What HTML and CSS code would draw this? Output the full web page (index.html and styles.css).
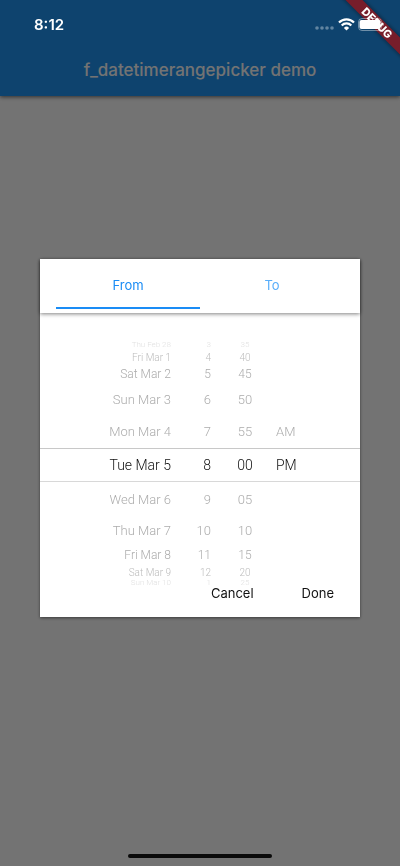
FILE: index.html
```html
<!DOCTYPE html>
<html lang="en">
<head>
<meta charset="utf-8">
<meta name="viewport" content="width=device-width, initial-scale=1">
<title>f_datetimerangepicker demo</title>
<link rel="stylesheet" href="styles.css">
</head>
<body>
<header class="app-bar">
  <h1 class="app-title">f_datetimerangepicker demo</h1>
</header>

<div class="barrier">
  <section class="dialog" role="dialog" aria-modal="true" aria-label="Date and time range">
    <div class="tabs" role="tablist">
      <button class="tab tab-active" role="tab" aria-selected="true">From</button>
      <button class="tab" role="tab" aria-selected="false">To</button>
    </div>
    <div class="picker">
      <ul class="wheel wheel-date">
        <li>Thu Feb 28</li><li>Fri Mar 1</li><li>Sat Mar 2</li><li>Sun Mar 3</li><li>Mon Mar 4</li>
        <li>Tue Mar 5</li>
        <li>Wed Mar 6</li><li>Thu Mar 7</li><li>Fri Mar 8</li><li>Sat Mar 9</li><li>Sun Mar 10</li>
      </ul>
      <ul class="wheel wheel-hour">
        <li>3</li><li>4</li><li>5</li><li>6</li><li>7</li>
        <li>8</li>
        <li>9</li><li>10</li><li>11</li><li>12</li><li>1</li>
      </ul>
      <ul class="wheel wheel-minute">
        <li>35</li><li>40</li><li>45</li><li>50</li><li>55</li>
        <li>00</li>
        <li>05</li><li>10</li><li>15</li><li>20</li><li>25</li>
      </ul>
      <ul class="wheel wheel-period">
        <li></li><li></li><li></li><li></li><li>AM</li>
        <li>PM</li>
        <li></li><li></li><li></li><li></li><li></li>
      </ul>
    </div>
    <div class="actions">
      <button class="action">Cancel</button>
      <button class="action">Done</button>
    </div>
  </section>
</div>

<div class="banner-corner"><span class="banner">DEBUG</span></div>

<div class="status-bar">
  <span class="time">8:12</span>
  <span class="status-icons">
    <svg class="signal" width="20" height="14" viewBox="0 0 20 14" aria-hidden="true">
      <circle cx="2" cy="11" r="1.8"/><circle cx="7" cy="11" r="1.8"/><circle cx="12" cy="11" r="1.8"/><circle cx="17" cy="11" r="1.8"/>
    </svg>
    <svg class="wifi" width="17" height="13" viewBox="0 0 17 13" aria-hidden="true">
      <path d="M1 4.6A10.4 10.4 0 0 1 16 4.6M3.7 7.4A6.6 6.6 0 0 1 13.3 7.4" fill="none" stroke="#fff" stroke-width="2.2"/>
      <path d="M8.500 12.600 5.900 9.900A3.700 3.700 0 0 1 11.100 9.900Z" fill="#fff"/>
    </svg>
    <svg class="battery" width="26" height="13" viewBox="0 0 26 13" aria-hidden="true">
      <rect x=".5" y=".5" width="23" height="12" rx="3.5" fill="none" stroke="#fff" stroke-opacity=".4"/>
      <rect x="1.500" y="2" width="21" height="9" rx="2" fill="#fff"/>
      <path d="M24.500 4.500q1.500.5 1.500 2t-1.500 2z" fill="#fff" fill-opacity=".4"/>
    </svg>
  </span>
</div>
<div class="home-indicator"></div>
</body>
</html>
```
FILE: styles.css
```css
* {
  box-sizing: border-box;
}

body {
  margin: 0;
  min-height: 100vh;
  background: #fff;
  font-family: Inter, "Liberation Sans", sans-serif;
}

button {
  margin: 0;
  border: 0;
  background: none;
  font: inherit;
  cursor: pointer;
}

.app-bar {
  display: flex;
  justify-content: center;
  padding: 58px 16px 14px;
  background: #2196f3;
  box-shadow: 0 1px 4px rgba(0, 0, 0, 0.6);
}

.app-title {
  margin: 0;
  color: #fff;
  font-size: 17px;
  line-height: 24px;
  font-weight: 500;
}

.barrier {
  position: fixed;
  inset: 0;
  display: flex;
  align-items: center;
  justify-content: center;
  padding: 10px 40px 0;
  background: rgba(0, 0, 0, 0.55);
}

.dialog {
  width: 100%;
  max-width: 560px;
  background: #fff;
  box-shadow: 0 1px 3px rgba(0, 0, 0, 0.5);
}

.tabs {
  display: flex;
  padding: 0 16px 4px;
  box-shadow: 0 1px 4px rgba(0, 0, 0, 0.5);
}

.tab {
  flex: 1;
  padding: 17px 0 13px;
  border-bottom: 2px solid transparent;
  color: #59aefa;
  font-size: 13px;
  line-height: 18px;
}

.tab-active {
  border-bottom-color: #1a8cf5;
  color: #1a8cf5;
}

.picker {
  display: grid;
  grid-template-columns: 131fr 40fr 46fr 103fr;
  padding-top: 27px;
}

.wheel {
  display: grid;
  grid-template-rows: 10px 14px 20px 30px 34px 34px 34px 28px 22px 12px 10px;
  margin: 0;
  padding: 0;
  list-style: none;
  color: #acacac;
  font-family: Roboto, sans-serif;
  font-weight: 300;
}

.wheel li {
  display: flex;
  align-items: center;
  overflow: hidden;
  font-size: 13px;
  white-space: nowrap;
}

.wheel-date li,
.wheel-hour li {
  justify-content: flex-end;
}

.wheel-minute li {
  justify-content: center;
  padding-left: 22px;
}

.wheel-period li {
  padding-left: 19px;
}

.wheel li:nth-child(1),
.wheel li:nth-child(11) {
  color: #e2e2e2;
  font-size: 8px;
  line-height: 10px;
}

.wheel li:nth-child(2),
.wheel li:nth-child(10) {
  color: #bcbcbc;
  font-size: 10px;
}

.wheel li:nth-child(3),
.wheel li:nth-child(9) {
  font-size: 12px;
}

.wheel li:nth-child(6) {
  border-top: 1px solid #c8c8c8;
  border-bottom: 1px solid #d8d8d8;
  color: #111;
  font-size: 14px;
}

.actions {
  display: flex;
  justify-content: flex-end;
  gap: 16px;
  margin-top: -4px;
  padding: 0 10px 15px;
}

.action {
  padding: 0 16px;
  color: #111;
  font-size: 13px;
  line-height: 18px;
}

.status-bar {
  position: fixed;
  inset: 0 0 auto;
  display: flex;
  align-items: center;
  justify-content: space-between;
  height: 48px;
  padding: 0 16px 0 34px;
  color: #fff;
}

.time {
  font-size: 15px;
  font-weight: 600;
}

.status-icons {
  display: flex;
  align-items: center;
  gap: 3px;
}

.signal {
  fill: #fff;
  fill-opacity: 0.35;
}

.banner-corner {
  position: fixed;
  top: 0;
  right: 0;
  width: 64px;
  height: 64px;
  overflow: hidden;
}

.banner {
  position: absolute;
  top: 17px;
  left: -9px;
  width: 100px;
  background: #771d2b;
  box-shadow: 0 0 5px rgba(0, 0, 0, 0.5);
  color: #fff;
  font-size: 11px;
  font-weight: 800;
  line-height: 12px;
  text-align: center;
  transform: rotate(45deg);
}

.home-indicator {
  position: fixed;
  bottom: 8px;
  left: 50%;
  width: 36%;
  height: 4px;
  margin-left: -18%;
  border-radius: 2px;
  background: #0a0a0a;
}
```
